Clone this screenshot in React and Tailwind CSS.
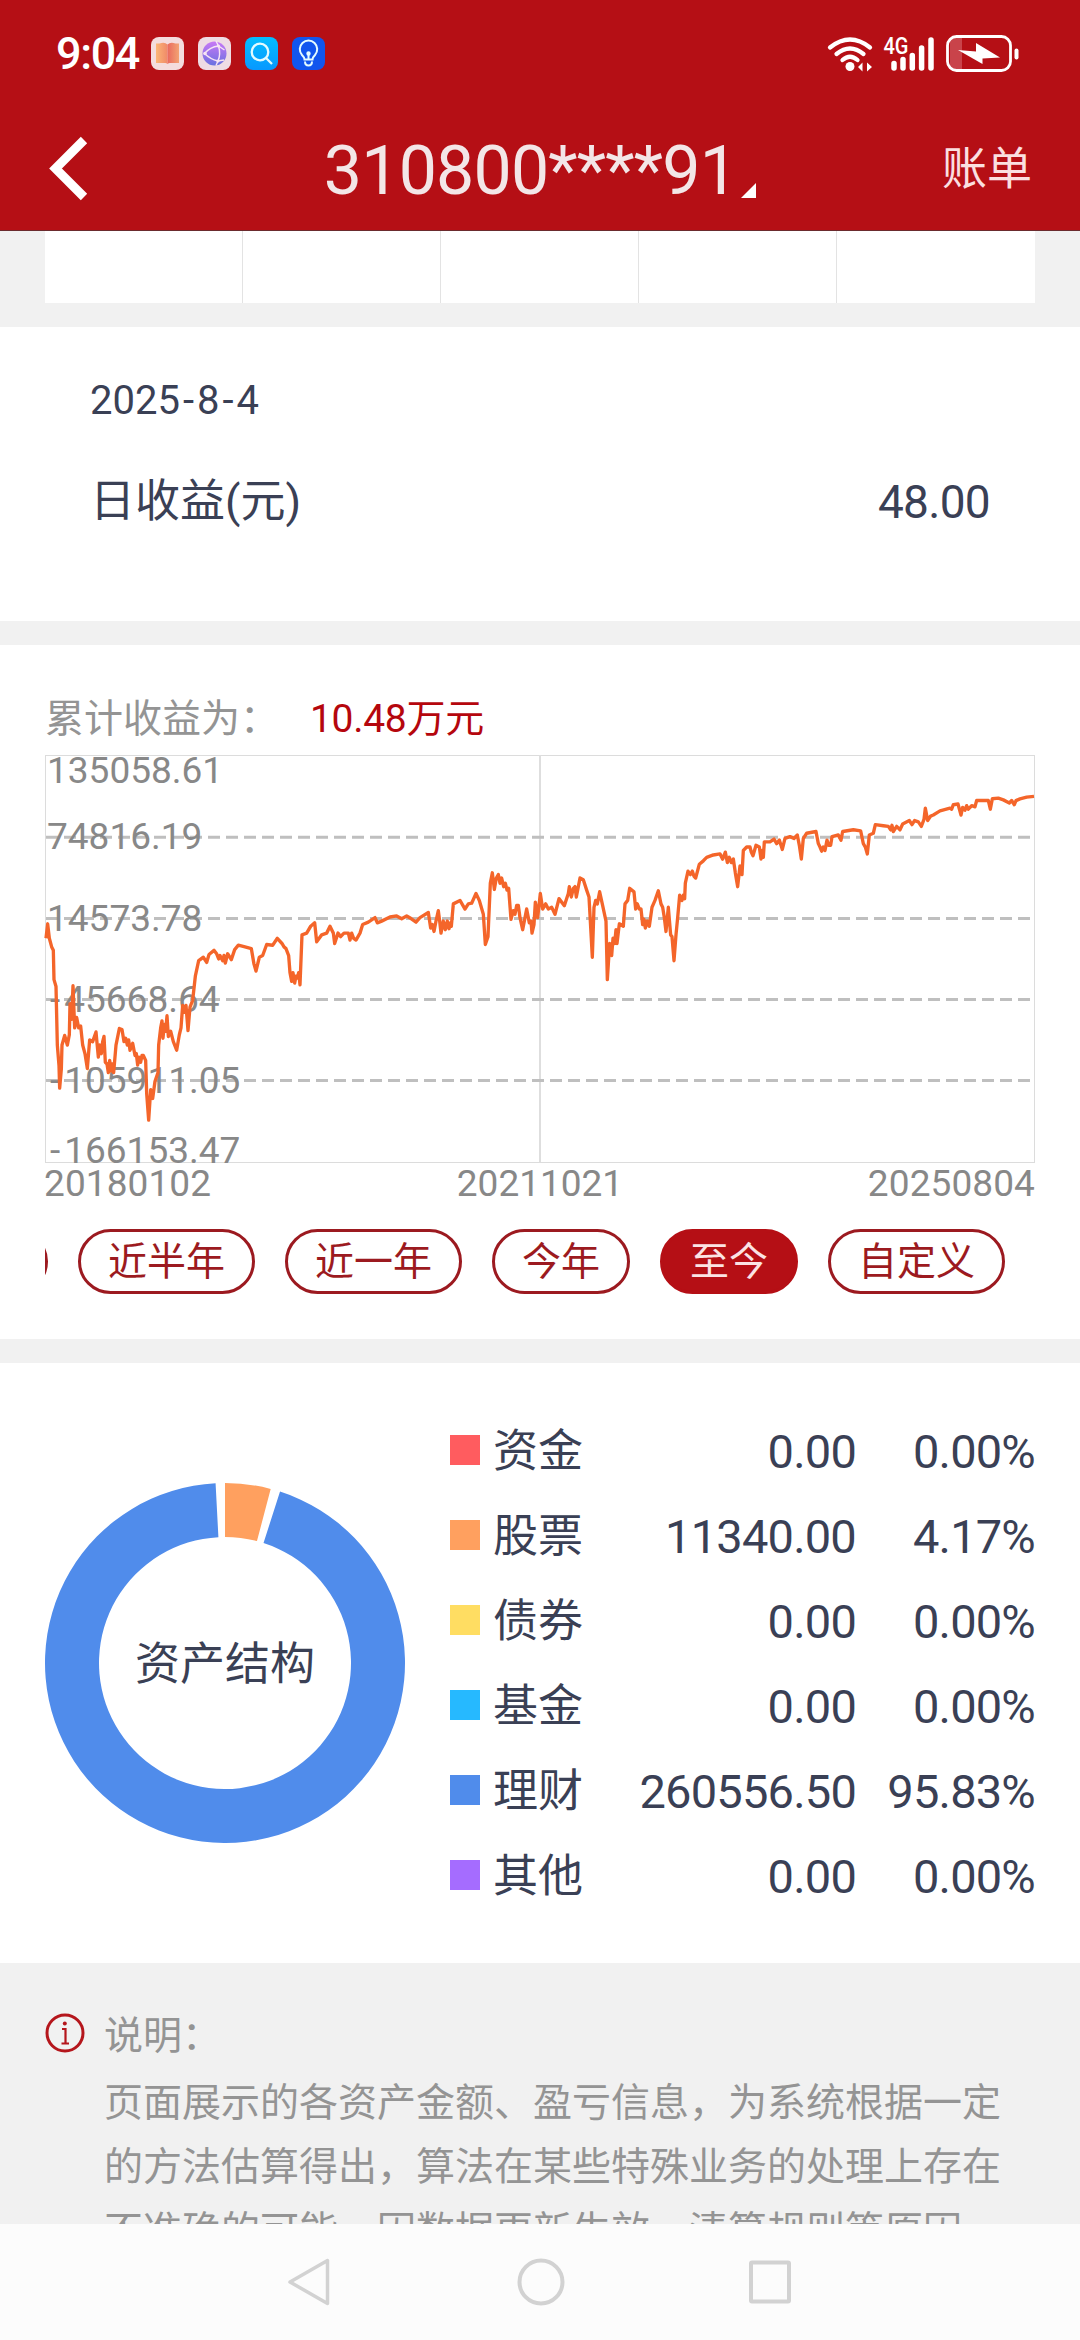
import React, { useState } from 'react';

// points of the cumulative profit curve, scaled down in ProfitChart
const curve = `138,750 143,708 148,750 155,775 160,785 162,870 168,890 172,1060 177,1120 179,1185 184,1130 186,1060
194,1032 202,1060 208,1030 210,940 215,985 219,888 224,1010 230,980 236,1010 242,1005 248,1060 255,1085 262,1128
269,1045 278,1050 288,1022 295,1095 299,1060 304,1085 308,1050 312,1035 316,1110 321,1115 325,1140 329,1105 334,1135 337,1115
341,1140 348,1060 358,1012 366,1015 372,1050 377,1040 382,1060 386,1045 390,1075 398,1055 405,1090 409,1085 413,1118 417,1095
422,1110 426,1090 430,1090 437,1105 440,1200 446,1278 452,1190 458,1215 465,1165 474,1140 476,1060 482,1010 486,990 489,1040
493,1000 497,1020 501,975 505,1035 512,1020 520,1050 530,1075 538,1030 543,1010 548,945 553,965 558,945 564,1018 570,950
578,930 586,860 596,815 610,805 620,820 627,797 642,785 650,795 656,810 660,800 668,815 672,800 676,822 683,795
694,812 704,783 715,770 735,775 754,780 762,825 768,845 778,805 788,800 800,768 818,770 832,750 846,765 852,775 858,780
866,800 870,850 875,875 879,850 884,880 888,860 892,865 896,850 900,885 906,740 920,735 932,715 944,705 950,760 965,740
980,735 990,715 1000,735 1004,765 1014,735 1022,745 1032,735 1045,735 1050,755 1055,735 1061,750 1068,755 1080,735 1088,710
1105,703 1125,690 1132,705 1145,700 1170,688 1190,685 1205,693 1220,685 1232,692 1248,703 1260,690 1285,675 1292,720
1297,710 1302,730 1308,700 1315,670 1319,700 1323,735 1330,700 1336,725 1342,700 1347,722 1352,705 1354,715 1360,650
1380,640 1395,665 1405,650 1415,648 1428,620 1438,640 1450,680 1456,768 1464,745 1471,590 1477,560 1483,608 1489,575
1495,565 1500,590 1505,575 1511,600 1516,590 1521,610 1526,605 1533,695 1540,670 1545,680 1550,655 1555,655 1560,690
1568,725 1574,695 1580,665 1588,705 1593,700 1596,735 1602,710 1606,645 1613,690 1621,620 1628,665 1637,650 1645,665
1655,660 1665,680 1677,635 1693,655 1705,620 1708,600 1714,630 1720,605 1725,600 1729,630 1733,610 1740,575
1750,580 1760,610 1767,630 1777,805 1782,660 1787,640 1792,650 1799,615 1808,655 1818,700 1822,870 1829,765 1835,800
1839,750 1844,765 1848,725 1851,765 1858,708 1870,715 1875,650 1883,640 1889,605 1902,615 1907,665 1912,650 1918,665
1923,665 1928,710 1932,695 1936,720 1942,700 1948,715 1956,660 1965,640 1975,612 1983,650 1988,660 1993,690 1998,730
2005,660 2012,740 2016,745 2022,815 2028,740 2033,690 2039,625 2046,640 2050,625 2054,635 2056,590 2064,555 2071,565
2077,555 2082,570 2087,575 2098,535 2110,525 2120,515 2140,508 2160,505 2168,520 2176,500 2182,530 2188,515 2194,530
2200,520 2206,560 2213,600 2220,540 2226,565 2230,495 2240,485 2250,485 2254,500 2259,510 2268,480 2278,485 2283,520
2287,495 2290,515 2293,470 2310,470 2322,462 2330,475 2338,465 2347,492 2355,460 2370,455 2382,460 2392,450 2398,480
2404,520 2410,460 2420,445 2448,440 2455,475 2460,485 2465,497 2470,485 2475,495 2481,465 2486,480 2492,480 2496,455
2515,450 2523,465 2528,440 2560,435 2582,438 2590,475 2596,485 2602,505 2608,450 2620,445 2626,420 2650,423 2665,425
2672,435 2676,422 2680,440 2690,425 2700,435 2708,418 2728,408 2736,420 2744,408 2755,412 2764,425 2772,405 2776,372
2783,408 2792,395 2800,392 2820,380 2850,372 2855,375 2860,362 2874,360 2883,392 2888,370 2895,378 2900,365 2905,375
2915,365 2925,368 2930,350 2965,350 2971,375 2977,345 2995,343 3010,348 3028,357 3035,350 3043,362 3048,350 3060,345
3080,340 3102,338`;

const yLabels = [
  { text: '135058.61', y: 782.5 },
  { text: '74816.19', y: 848.5 },
  { text: '14573.78', y: 930.5 },
  { text: '-45668.64', y: 1011.5 },
  { text: '-105911.05', y: 1092.5 },
  { text: '-166153.47', y: 1162.5 },
];

const ranges = ['近半年', '近一年', '今年', '至今', '自定义'];

const assets = [
  { name: '资金', amount: '0.00', percent: '0.00%', color: 'bg-[#ff5c5f]' },
  { name: '股票', amount: '11340.00', percent: '4.17%', color: 'bg-[#ffa05f]' },
  { name: '债券', amount: '0.00', percent: '0.00%', color: 'bg-[#ffdd62]' },
  { name: '基金', amount: '0.00', percent: '0.00%', color: 'bg-[#26b9ff]' },
  { name: '理财', amount: '260556.50', percent: '95.83%', color: 'bg-[#508ceb]' },
  { name: '其他', amount: '0.00', percent: '0.00%', color: 'bg-[#a56cff]' },
];

function ring(from, to) {
  const pt = (r, deg) => {
    const a = (deg * Math.PI) / 180;
    return `${180 + r * Math.sin(a)} ${180 - r * Math.cos(a)}`;
  };
  const large = to - from > 180 ? 1 : 0;
  return `M${pt(180, from)} A180 180 0 ${large} 1 ${pt(180, to)} L${pt(126, to)} A126 126 0 ${large} 0 ${pt(126, from)} Z`;
}

function StatusBar() {
  return (
    <div className="h-[107px] pl-[56px] pr-[60px] flex items-center justify-between text-white">
      <div className="flex items-center">
        <span className="w-[95px] text-[45px] leading-none font-medium tracking-[-1.400px]">9:04</span>
        <div className="flex gap-[14px]">
          <svg width="33" height="33" viewBox="0 0 33 33">
            <defs>
              <linearGradient id="pageLeft"><stop stopColor="#fbb677" /><stop offset="1" stopColor="#f08a68" /></linearGradient>
              <linearGradient id="pageRight"><stop stopColor="#e96a5e" /><stop offset="1" stopColor="#f3a373" /></linearGradient>
            </defs>
            <rect width="33" height="33" rx="8" fill="#f4dcdd" />
            <path d="M5 6.500h3.500q5-2 8 1V27q-1.500-1.500-3-1H5z" fill="url(#pageLeft)" />
            <path d="M28 6.500h-3.500q-5-2-8 1V27q1.500-1.500 3-1H28z" fill="url(#pageRight)" />
          </svg>
          <svg width="33" height="33" viewBox="0 0 33 33">
            <defs>
              <linearGradient id="globe" x2="0" y2="1"><stop stopColor="#c879f5" /><stop offset="1" stopColor="#6a70e0" /></linearGradient>
            </defs>
            <rect width="33" height="33" rx="8" fill="#eedce4" />
            <circle cx="16.500" cy="16.500" r="12" fill="url(#globe)" />
            <path d="M6.500 16.500Q12 10 20.500 9l6 4M6.500 16.500Q12 22 20 24l6-1M18 4l2.500 5q2.500 8-.5 15l-2 4.500" fill="none" stroke="#f6e4f4" strokeWidth="1.400" />
            <circle cx="7" cy="16.500" r="1.800" fill="#f6e4f4" />
            <circle cx="20.500" cy="9" r="1.600" fill="#f6e4f4" />
            <circle cx="20" cy="24" r="1.600" fill="#f6e4f4" />
          </svg>
          <svg width="33" height="33" viewBox="0 0 33 33" fill="none" stroke="#e4fbff" strokeWidth="2.300">
            <defs>
              <linearGradient id="search" x2="0" y2="1"><stop stopColor="#04bdff" /><stop offset="1" stopColor="#0898ff" /></linearGradient>
            </defs>
            <rect width="33" height="33" rx="8" fill="url(#search)" stroke="none" />
            <circle cx="15" cy="15" r="8.300" />
            <path d="M21 21l6 6" />
          </svg>
          <svg width="33" height="33" viewBox="0 0 33 33" fill="none" stroke="#e4fbff" strokeWidth="2">
            <rect width="33" height="33" rx="8" fill="#1156ee" stroke="none" />
            <path d="M12.500 22.500q0-2-2.500-4.500a8.700 8.700 0 1 1 13 0q-2.500 2.500-2.500 4.500zM13 24.500q0 4 3.500 4t3.500-4M16.500 22v-6" />
            <circle cx="16.500" cy="16.500" r="1.200" fill="#e4fbff" />
          </svg>
        </div>
      </div>
      <svg className="overflow-visible" width="193" height="38" viewBox="826 35 193 38" fill="none" stroke="#fff" strokeLinecap="round">
        <path d="M829 47.500q20-16 40 0M835.500 54q13.500-11 27 0M841.500 60q7.500-6.500 15 0" strokeWidth="4.300" />
        <circle cx="849" cy="66.500" r="4.500" fill="#fff" stroke="none" />
        <path d="M857 67l4.500-4.500v9zM871 67l-5-4.500v9z" fill="#fff" stroke="none" />
        <text x="882.500" y="54" textLength="25" lengthAdjust="spacingAndGlyphs" fontSize="23" className="font-medium" fill="#fff" stroke="none">4G</text>
        <path d="M893 63.500v4.500M902 59.500v8.500M911.300 55.500V68M920.600 48v20M930 40v28" strokeWidth="5.500" />
        <rect x="949" y="38" width="12" height="31" fill="#c9434a" stroke="none" />
        <rect x="946.500" y="36.500" width="63" height="34" rx="9" strokeWidth="2.800" />
        <path d="M1015.500 50.500v7" strokeWidth="4" />
        <path d="M957 50l18 1.500V43l24 14.500-17.500 1V64z" fill="#fff" stroke="none" />
      </svg>
    </div>
  );
}

function Header() {
  return (
    <header className="h-[231px] bg-[#b50f15] border-b border-[#6b2b2e] shrink-0">
      <StatusBar />
      <div className="h-[123px] px-[48px] flex items-center justify-between">
        <svg className="w-[90px]" height="66" viewBox="0 0 90 66" fill="none" stroke="#fff" strokeWidth="9">
          <path d="M36 4L7.500 32.500 36 61" />
        </svg>
        <div className="flex items-end pt-[4px] text-[68px] leading-[72px] text-[#f3e6e7]">
          <span className="tracking-[-0.800px]">310800****91</span>
          <svg className="ml-[4px] mb-[9px]" width="15" height="15"><path d="M15 0v15H0z" fill="#fff" /></svg>
        </div>
        <button className="pt-[2px] text-[45px] leading-[60px] text-[#fbdfe0] w-[90px]">账单</button>
      </div>
    </header>
  );
}

function ProfitChart() {
  return (
    <svg width="990" height="450" viewBox="45 750 990 450" className="block overflow-visible">
      <rect x="45.500" y="755.500" width="989" height="407" fill="none" stroke="#dcdcdc" />
      <path d="M540 755v407" stroke="#dedede" strokeWidth="2" />
      <path d="M46 837.300H1034M46 918.400H1034M46 999.500H1034M46 1080.600H1034" stroke="#bfbfbf" strokeWidth="3" strokeDasharray="12 6" />
      <g fontSize="37" fill="#888">
        {yLabels.map(({ text, y }) => (
          <text key={text} x={text[0] === '-' ? 50 : 47} y={y}>
            {text[0] === '-' ? <>-<tspan dx="4">{text.slice(1)}</tspan></> : text}
          </text>
        ))}
        <text x="44" y="1195.500" letterSpacing="0.1">20180102</text>
        <text x="540" y="1195.500" textAnchor="middle">20211021</text>
        <text x="1035" y="1195.500" textAnchor="end" letterSpacing="0.1">20250804</text>
      </g>
      <polyline points={curve} transform="translate(0 680) scale(0.33333 0.3444)" fill="none" stroke="#f4652a" strokeWidth="10" strokeLinejoin="round" />
    </svg>
  );
}

export default function App() {
  const [range, setRange] = useState('至今');

  return (
    <div className="w-[1080px] h-[2340px] flex flex-col overflow-hidden bg-[#f1f1f1] text-[#3a4055] font-[Roboto,'Noto_Sans_CJK_SC',sans-serif]">
      <Header />

      <main className="h-[1993px] overflow-hidden">
        <div className="mx-[45px] h-[72px] grid grid-cols-5 divide-x divide-[#e3e3e3] bg-white">
          {[0, 1, 2, 3, 4].map(i => <div key={i} />)}
        </div>

        <section className="mt-[24px] h-[294px] bg-white px-[90px] pt-[45px]">
          <p className="text-[40px] leading-[58px]">
            2025<span className="mx-[3px]">-</span>8<span className="mx-[3px]">-</span>4
          </p>
          <div className="mt-[42px] flex justify-between items-center leading-[60px]">
            <span className="text-[45px]">日收益(元)</span>
            <span className="text-[46px] tracking-[-0.700px]">48.00</span>
          </div>
        </section>

        <section className="mt-[24px] h-[694px] bg-white px-[45px] pt-[45px]">
          <div className="flex h-[58px] items-center text-[39px] leading-[58px]">
            <span className="w-[265px] text-[#949494]">累计收益为：</span>
            <span className="text-[#b5060d] tracking-[-0.300px]">10.48万元</span>
          </div>
          <div className="mt-[2px]">
            <ProfitChart />
          </div>
          <div className="mt-[29px] pr-[30px] flex justify-end gap-[30px] overflow-hidden text-[39px]">
            <button className="w-[177px] h-[65px] shrink-0 rounded-full border-3 border-[#9c1a20]" />
            {ranges.map(r => (
              <button
                key={r}
                onClick={() => setRange(r)}
                className={`h-[65px] shrink-0 rounded-full border-3 px-[27px] pt-[2px] leading-[57px] ${
                  r === range ? 'bg-[#b50f15] border-[#b50f15] text-[#fbe3e4]' : 'border-[#9c1a20] text-[#9c1a20]'
                }`}
              >
                {r}
              </button>
            ))}
          </div>
        </section>

        <section className="mt-[24px] h-[600px] bg-white px-[45px] flex">
          <div className="relative mt-[120px] w-[360px] h-[360px] flex items-center justify-center">
            <svg className="absolute inset-0" width="360" height="360">
              <path d={ring(0, 14.7)} fill="#ffa05f" />
              <path d={ring(17.8, 357)} fill="#508ceb" />
            </svg>
            <span className="relative pt-[3px] text-[45px]">资产结构</span>
          </div>
          <ul className="ml-[45px] mt-[44px] flex-1">
            {assets.map(a => (
              <li key={a.name} className="h-[85px] flex items-center text-[47px] leading-[80px] tracking-[-0.800px]">
                <span className={`w-[30px] h-[30px] ${a.color}`} />
                <span className="ml-[13px] pt-[5px] text-[45px] tracking-normal">{a.name}</span>
                <span className="ml-auto pt-[5px]">{a.amount}</span>
                <span className="w-[179px] pt-[5px] text-right">{a.percent}</span>
              </li>
            ))}
          </ul>
        </section>

        <section className="px-[45px] pt-[41px] flex text-[39px] leading-[64px] text-[#949494]">
          <svg className="mt-[9px] shrink-0" width="40" height="40" viewBox="0 0 40 40" fill="none" stroke="#b5161c">
            <circle cx="20" cy="20" r="18" strokeWidth="3" />
            <path d="M17 16h3.500v14M16.500 30.500h7.500" strokeWidth="2.200" />
            <circle cx="19.800" cy="10.500" r="2" fill="#b5161c" stroke="none" />
          </svg>
          <div className="ml-[19px] whitespace-nowrap">
            <p>说明：</p>
            <p className="mt-[3px]">
              页面展示的各资产金额、盈亏信息，为系统根据一定<br />
              的方法估算得出，算法在某些特殊业务的处理上存在<br />
              不准确的可能，因数据更新生效、清算规则等原因，
            </p>
          </div>
        </section>
      </main>

      <nav className="flex-1 bg-[#fcfcfc] flex justify-center items-center gap-[183px]">
        <svg width="46" height="50" viewBox="0 0 46 50" fill="none" stroke="#d2d2d2" strokeWidth="3.500" strokeLinejoin="round">
          <path d="M39.500 3.500v43L2 25z" />
        </svg>
        <svg width="48" height="48" viewBox="0 0 48 48" fill="none" stroke="#d2d2d2" strokeWidth="4">
          <circle cx="24" cy="24" r="21.500" />
        </svg>
        <svg width="44" height="44" viewBox="0 0 44 44" fill="none" stroke="#d2d2d2" strokeWidth="4">
          <rect x="3" y="2.500" width="38" height="39" rx="1" />
        </svg>
      </nav>
    </div>
  );
}
